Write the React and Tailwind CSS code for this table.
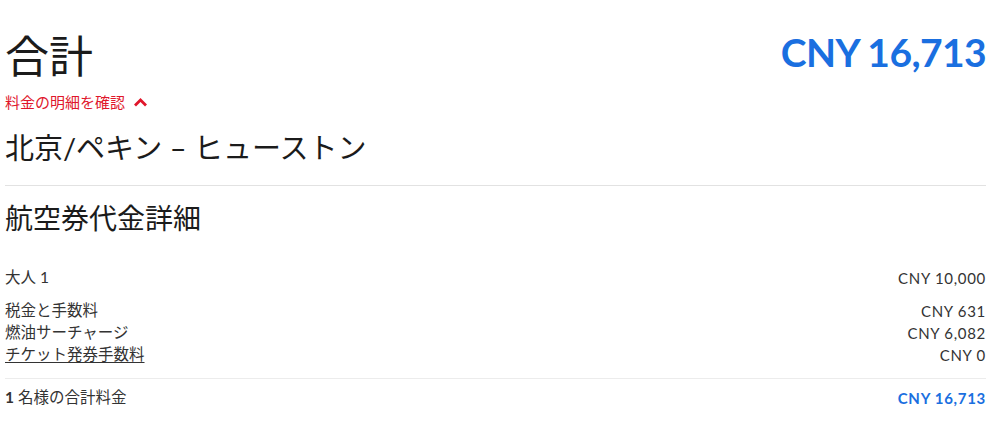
import React from 'react';

const jp = { fontFamily: 'Lato, "Noto Sans CJK JP", sans-serif' };

const Row = ({ label, value, underline }) => (
  <div className="flex justify-between items-center h-[22px] text-[15.5px] text-[#333]">
    <span className={underline ? 'underline underline-offset-2' : ''}>{label}</span>
    <span className="text-[15px] tracking-[0.7px]">{value}</span>
  </div>
);

export default function App() {
  return (
    <div className="bg-white w-[1000px] h-[426px] pl-[5px] pr-[14px] pt-[28px]" style={jp}>
      <div className="flex justify-between items-start">
        <h1 className="text-[44px] leading-[56px] text-[#1b1b1b]">合計</h1>
        <div className="text-[39px] leading-[56px] font-bold text-[#1a6fe0] tracking-[-0.6px] mt-[-4px]">CNY 16,713</div>
      </div>
      <button className="flex items-center gap-[8px] text-[15px] text-[#e0162b] leading-[20px] mt-[8px]">
        料金の明細を確認
        <svg width="15" height="10" viewBox="0 0 15 10">
          <path d="M2 8.5 L7.5 3 L13 8.5" fill="none" stroke="#e0162b" strokeWidth="2.8" />
        </svg>
      </button>
      <div className="text-[29px] leading-[40px] text-[#1b1b1b] mt-[16px]">北京/ペキン – ヒューストン</div>
      <div className="border-t border-[#e2e2e2] mt-[17px]" />
      <div className="text-[28px] leading-[40px] text-[#1b1b1b] mt-[12px]">航空券代金詳細</div>
      <div className="mt-[29px]">
        <Row label="大人 1" value="CNY 10,000" />
      </div>
      <div className="mt-[11px]">
        <Row label="税金と手数料" value="CNY 631" />
        <Row label="燃油サーチャージ" value="CNY 6,082" />
        <Row label="チケット発券手数料" value="CNY 0" underline />
      </div>
      <div className="border-t border-[#ececec] mt-[12px]" />
      <div className="flex justify-between items-center h-[22px] text-[15.5px] text-[#333] mt-[8px]">
        <span><b className="font-bold">1</b> 名様の合計料金</span>
        <span className="text-[15px] tracking-[0.7px] font-bold text-[#1a6fe0]">CNY 16,713</span>
      </div>
    </div>
  );
}
